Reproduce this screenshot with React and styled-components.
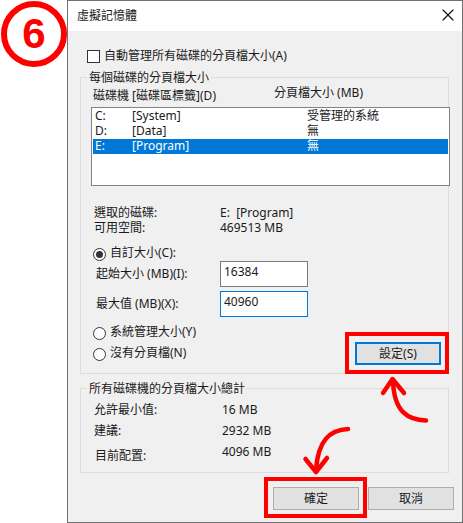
import React from "react";
import styled, { createGlobalStyle } from "styled-components";
import { X } from "lucide-react";

const GlobalStyle = createGlobalStyle`
  html, body {
    margin: 0;
    padding: 0;
    background: #fff;
  }
  body {
    width: 463px;
    height: 523px;
    overflow: hidden;
    font-family: "Noto Sans", "Noto Sans CJK TC", sans-serif;
    font-size: 12px;
    color: #1a1a1a;
  }
`;

const drives = [
  { letter: "C:", label: "[System]", size: "受管理的系統" },
  { letter: "D:", label: "[Data]", size: "無" },
  { letter: "E:", label: "[Program]", size: "無", selected: true },
];

const totals = [
  { name: "允許最小值:", value: "16 MB" },
  { name: "建議:", value: "2932 MB" },
  { name: "目前配置:", value: "4096 MB", low: true },
];

const App = () => {
  return (
    <Page>
      <GlobalStyle />
      <Badge>6</Badge>
      <Dialog>
        <TitleBar>
          <span>虛擬記憶體</span>
          <X size={20} strokeWidth={1.4} color="#111" />
        </TitleBar>
        <Body>
          <CheckRow>
            <CheckBox />
            <span>自動管理所有磁碟的分頁檔大小(A)</span>
          </CheckRow>
          <Group $height={297}>
            <Legend>每個磁碟的分頁檔大小</Legend>
            <ListHeader>
              <ColumnTitle $top={10}>磁碟機 [磁碟區標籤](D)</ColumnTitle>
              <ColumnTitle $top={7}>分頁檔大小 (MB)</ColumnTitle>
            </ListHeader>
            <DriveList>
              {drives.map((d) => (
                <DriveRow key={d.letter} $selected={d.selected}>
                  <span>{d.letter}</span>
                  <span>{d.label}</span>
                  <span>{d.size}</span>
                </DriveRow>
              ))}
            </DriveList>
            <InfoRow $top={20}>
              <span>選取的磁碟:</span>
              <span>E:&nbsp; [Program]</span>
            </InfoRow>
            <InfoRow>
              <span>可用空間:</span>
              <span>469513 MB</span>
            </InfoRow>
            <RadioRow $top={11}>
              <Radio $checked />
              <span>自訂大小(C):</span>
            </RadioRow>
            <FieldRow>
              <FieldLabel>起始大小 (MB)(I):</FieldLabel>
              <Field>16384</Field>
            </FieldRow>
            <FieldRow $top={4}>
              <FieldLabel>最大值 (MB)(X):</FieldLabel>
              <Field $focused>40960</Field>
            </FieldRow>
            <BottomRow>
              <RadioColumn>
                <RadioRow>
                  <Radio />
                  <span>系統管理大小(Y)</span>
                </RadioRow>
                <RadioRow>
                  <Radio />
                  <span>沒有分頁檔(N)</span>
                </RadioRow>
              </RadioColumn>
              <SetButton>設定(S)</SetButton>
            </BottomRow>
          </Group>
          <Group $height={85}>
            <Legend>所有磁碟機的分頁檔大小總計</Legend>
            <Totals>
              {totals.map((t) => (
                <TotalRow key={t.name}>
                  <TotalName $low={t.low}>{t.name}</TotalName>
                  <span>{t.value}</span>
                </TotalRow>
              ))}
            </Totals>
          </Group>
          <Footer>
            <Button>確定</Button>
            <Button>取消</Button>
          </Footer>
        </Body>
      </Dialog>

      <Callout $left={345} $top={332} $width={104} $height={42} />
      <Callout $left={264} $top={477} $width={103} $height={41} />

      <Arrows viewBox="0 0 463 523">
        <path d="M426 420.5 C408 420 394 412 393 381" />
        <path d="M383 393 L392.5 379 L404 393" />
        <path d="M348 429 C330 430 318 440 316 470" />
        <path d="M305.5 459 L316 472 L327 458" />
      </Arrows>
    </Page>
  );
};

const Page = styled.div`
  position: relative;
  width: 463px;
  height: 523px;
  overflow: hidden;
  display: flex;
  justify-content: flex-end;
`;

const Badge = styled.div`
  position: absolute;
  left: 1px;
  top: 1px;
  width: 66px;
  height: 66px;
  box-sizing: border-box;
  border: 6px solid #ff0000;
  border-radius: 50%;
  display: flex;
  align-items: center;
  justify-content: center;
  color: #ff0000;
  font-family: "Liberation Sans", sans-serif;
  font-size: 42px;
  font-weight: 700;
`;

const Dialog = styled.div`
  width: 396px;
  height: 523px;
  box-sizing: border-box;
  border: 1px solid #707070;
  background: #f0f0f0;
  display: flex;
  flex-direction: column;
`;

const TitleBar = styled.div`
  height: 30px;
  flex: none;
  box-sizing: border-box;
  background: #fff;
  display: flex;
  align-items: center;
  justify-content: space-between;
  padding: 0 4px 2px 9px;
`;

const Body = styled.div`
  flex: 1;
  padding: 18px 13px 0 12px;
  display: flex;
  flex-direction: column;
`;

const CheckRow = styled.div`
  height: 14px;
  display: flex;
  align-items: center;
  gap: 4px;
  padding-left: 7px;
  line-height: 14px;
`;

const CheckBox = styled.div`
  width: 13px;
  height: 13px;
  box-sizing: border-box;
  border: 1px solid #333;
  background: #fff;
`;

const Group = styled.div`
  position: relative;
  height: ${(p) => p.$height}px;
  box-sizing: border-box;
  margin-top: 14px;
  border: 1px solid #dcdcdc;
  padding-left: 10px;
  &:first-of-type {
    margin-top: 13px;
  }
`;

const Legend = styled.div`
  position: absolute;
  left: 6px;
  top: -8px;
  padding: 0 2px;
  background: #f0f0f0;
  line-height: 15px;
  white-space: nowrap;
`;

const ListHeader = styled.div`
  height: 29px;
  display: grid;
  grid-template-columns: 181px 1fr;
  padding-left: 2px;
  line-height: 15px;
`;

const ColumnTitle = styled.div`
  margin-top: ${(p) => p.$top}px;
  white-space: nowrap;
`;

const DriveList = styled.div`
  width: 359px;
  height: 79px;
  box-sizing: border-box;
  border: 1px solid #82828c;
  background: #fff;
  padding: 1px;
`;

const DriveRow = styled.div`
  height: 15px;
  display: grid;
  grid-template-columns: 37px 175px 1fr;
  padding-left: 2px;
  line-height: 13px;
  background: ${(p) => (p.$selected ? "#0078d7" : "transparent")};
  color: ${(p) => (p.$selected ? "#fff" : "#1a1a1a")};
`;

const InfoRow = styled.div`
  display: grid;
  grid-template-columns: 126px 1fr;
  height: 15px;
  padding-left: 3px;
  line-height: 13px;
  margin-top: ${(p) => p.$top || 0}px;
`;

const RadioRow = styled.div`
  height: 14px;
  display: flex;
  align-items: center;
  gap: 4px;
  padding-left: 2px;
  line-height: 14px;
  margin-top: ${(p) => p.$top || 0}px;
  span {
    padding-bottom: 2px;
  }
`;

const Radio = styled.div`
  position: relative;
  width: 13px;
  height: 13px;
  box-sizing: border-box;
  border: 1px solid #333;
  border-radius: 50%;
  background: #fff;
  &::after {
    content: "";
    display: ${(p) => (p.$checked ? "block" : "none")};
    position: absolute;
    left: 2px;
    top: 2px;
    width: 7px;
    height: 7px;
    border-radius: 50%;
    background: #333;
  }
`;

const FieldRow = styled.div`
  display: grid;
  grid-template-columns: 124px 88px;
  align-items: center;
  padding-left: 5px;
  margin-top: ${(p) => p.$top || 0}px;
`;

const FieldLabel = styled.span`
  padding-bottom: 2px;
`;

const Field = styled.div`
  height: 26px;
  box-sizing: border-box;
  border: 1px solid ${(p) => (p.$focused ? "#0078d7" : "#7a7a7a")};
  background: #fff;
  padding: 2px 3px;
  line-height: 15px;
`;

const BottomRow = styled.div`
  height: 56px;
  display: flex;
  justify-content: space-between;
  align-items: flex-end;
  padding: 0 7px 8px 0;
  box-sizing: border-box;
`;

const RadioColumn = styled.div`
  align-self: flex-start;
  padding-top: 9px;
  display: flex;
  flex-direction: column;
  gap: 7px;
`;

const SetButton = styled.div`
  width: 86px;
  height: 23px;
  box-sizing: border-box;
  border: 2px solid #0078d7;
  background: #e1e1e1;
  display: flex;
  align-items: center;
  justify-content: center;
  padding-bottom: 2px;
`;

const Totals = styled.div`
  padding: 14px 0 0 3px;
  display: flex;
  flex-direction: column;
  gap: 6px;
`;

const TotalRow = styled.div`
  display: grid;
  grid-template-columns: 128px 1fr;
  height: 15px;
  line-height: 13px;
`;

const TotalName = styled.span`
  margin-top: ${(p) => (p.$low ? 4 : 0)}px;
  margin-left: ${(p) => (p.$low ? 1 : 0)}px;
`;

const Footer = styled.div`
  margin: 14px -5px 0 0;
  display: flex;
  justify-content: flex-end;
  gap: 9px;
`;

const Button = styled.div`
  width: 86px;
  height: 23px;
  box-sizing: border-box;
  border: 1px solid #adadad;
  background: #e1e1e1;
  display: flex;
  align-items: center;
  justify-content: center;
  padding-bottom: 2px;
`;

const Callout = styled.div`
  position: absolute;
  left: ${(p) => p.$left}px;
  top: ${(p) => p.$top}px;
  width: ${(p) => p.$width}px;
  height: ${(p) => p.$height}px;
  box-sizing: border-box;
  border: 4px solid #ff0000;
`;

const Arrows = styled.svg`
  position: absolute;
  inset: 0;
  width: 463px;
  height: 523px;
  fill: none;
  stroke: #ff0000;
  stroke-width: 4.5;
  stroke-linecap: round;
  stroke-linejoin: round;
`;

export default App;
